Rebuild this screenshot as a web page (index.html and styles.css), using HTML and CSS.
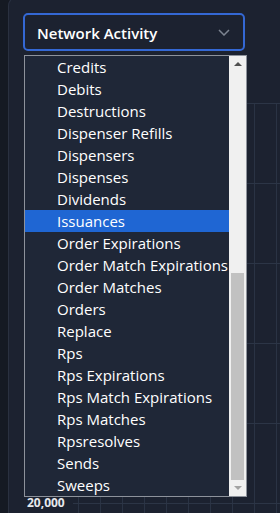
FILE: index.html
```html
<!DOCTYPE html>
<html lang="en">
<head>
    <meta charset="UTF-8">
    <meta name="viewport" content="width=device-width, initial-scale=1.0">
    <title>Network Activity</title>
    <link rel="stylesheet" href="styles.css">
</head>
<body>
    <div class="card">
        <div class="picker">
            <div class="select">
                <span class="select-label">Network Activity</span>
                <svg class="chevron" width="12" height="7" viewBox="0 0 12 7">
                    <path d="M1 1l5 5 5-5" fill="none" stroke="#7d8491" stroke-width="1.5"/>
                </svg>
            </div>
            <div class="dropdown">
                <ul class="options">
                    <li>Credits</li>
                    <li>Debits</li>
                    <li>Destructions</li>
                    <li>Dispenser Refills</li>
                    <li>Dispensers</li>
                    <li>Dispenses</li>
                    <li>Dividends</li>
                    <li class="active">Issuances</li>
                    <li>Order Expirations</li>
                    <li>Order Match Expirations</li>
                    <li>Order Matches</li>
                    <li>Orders</li>
                    <li>Replace</li>
                    <li>Rps</li>
                    <li>Rps Expirations</li>
                    <li>Rps Match Expirations</li>
                    <li>Rps Matches</li>
                    <li>Rpsresolves</li>
                    <li>Sends</li>
                    <li>Sweeps</li>
                </ul>
                <div class="scrollbar">
                    <span class="arrow up"></span>
                    <div class="thumb"></div>
                    <span class="arrow down"></span>
                </div>
            </div>
        </div>
        <div class="chart">
            <span class="tick">20,000</span>
        </div>
    </div>
</body>
</html>
```

FILE: styles.css
```css
body {
    margin: 0;
    background-color: #151a23;
    font-family: "Open Sans", "Noto Sans", sans-serif;
    overflow: hidden;
}
.card {
    margin: -4px 0 0 8px;
    height: 530px;
    background-color: #1c2230;
    border: 1px solid #2a3140;
    border-right: none;
    border-radius: 10px 0 0 10px;
    position: relative;
}
.picker {
    padding: 16px 0 0 14px;
    position: relative;
    z-index: 2;
}
.select {
    width: 222px;
    height: 38px;
    display: flex;
    align-items: center;
    justify-content: space-between;
    padding: 0 13px 0 12px;
    box-sizing: border-box;
    border: 2px solid #3468d4;
    border-radius: 5px;
    background-color: #1c2230;
}
.select-label {
    color: #ffffff;
    font-size: 15px;
    font-weight: 600;
    margin-top: 1px;
}
.chevron {
    margin-top: 1px;
}
.dropdown {
    position: absolute;
    top: 58px;
    left: 15px;
    width: 223px;
    height: 442px;
    box-sizing: border-box;
    border: 1px solid #8d929b;
    background-color: #1f2737;
    display: flex;
    overflow: hidden;
}
.options {
    list-style: none;
    margin: 0;
    padding: 0;
    flex: 1;
    min-width: 0;
    overflow: hidden;
}
.options li {
    height: 22px;
    line-height: 22px;
    padding-left: 32px;
    color: #ffffff;
    font-size: 15px;
    white-space: nowrap;
}
.options li.active {
    background-color: #1f66d3;
}
.scrollbar {
    width: 17px;
    background-color: #f0f0f0;
    display: flex;
    flex-direction: column;
    align-items: center;
}
.arrow {
    width: 0;
    height: 0;
    border-left: 4px solid transparent;
    border-right: 4px solid transparent;
    margin: 6px 0;
}
.arrow.up {
    border-bottom: 4px solid #505050;
}
.arrow.down {
    border-top: 4px solid #a3a3a3;
    margin-top: 6px;
}
.thumb {
    width: 13px;
    height: 207px;
    margin-top: auto;
    background-color: #c1c1c1;
}
.chart {
    position: absolute;
    top: 106px;
    left: 64px;
    right: 0;
    bottom: 0;
    background-image:
        linear-gradient(#2c3546 1px, transparent 1px),
        linear-gradient(90deg, #2a3344 1px, transparent 1px);
    background-size: 100% 80px, 22px 100%;
    background-position: 0 0, 5px 0;
}
.tick {
    position: absolute;
    left: -46px;
    top: 391px;
    color: #e6e8ec;
    font-size: 12px;
    font-weight: 700;
}
```
